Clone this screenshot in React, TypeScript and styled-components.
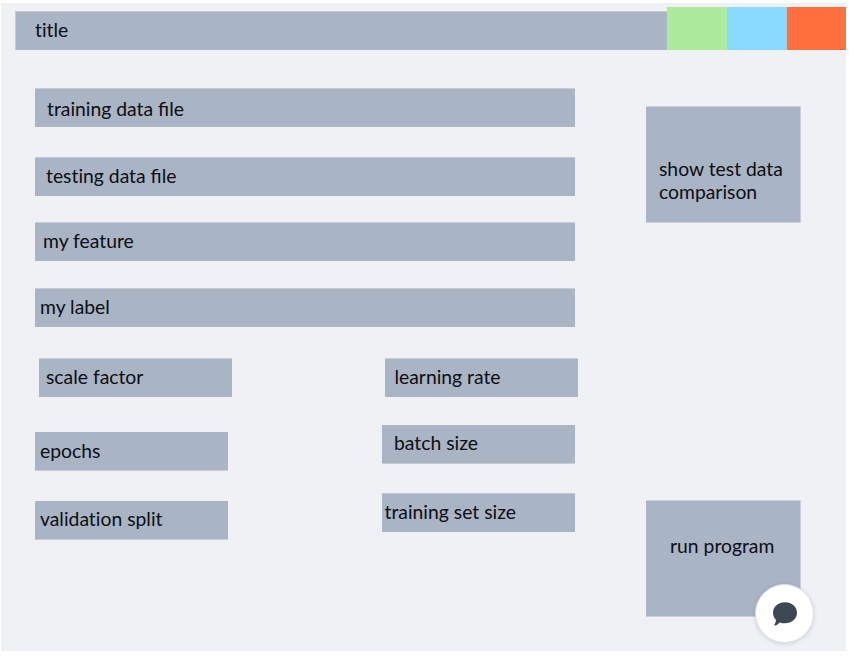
import React from "react";
import styled, { createGlobalStyle } from "styled-components";

const GlobalStyle = createGlobalStyle`
  * { box-sizing: border-box; }
  body {
    margin: 0;
    background: #fff;
    color: #0c0e12;
    font-family: Lato, "Open Sans", sans-serif;
    font-size: 19.33px;
    line-height: 23px;
    font-variant-ligatures: none;
  }
`;

const Canvas = styled.main`
  width: 845px;
  height: 648px;
  margin: 3px 0 0 1px;
  padding-top: 4px;
  background: #eff1f5;
`;

const Header = styled.header`
  display: flex;
  align-items: flex-end;
  height: 43px;
  padding-left: 14px;
`;

const TitleBar = styled.h1`
  flex: 1;
  height: 39px;
  margin: 0;
  padding: 6px 0 0 19px;
  font: inherit;
  font-variant-ligatures: none;
  border-top: 1px solid #c3cbd7;
  border-left: 1px solid #c3cbd7;
  background: #a9b4c5;
`;

const Swatch = styled.div<{ $color: string; $width: number }>`
  width: ${(p) => p.$width}px;
  height: 43px;
  background: ${(p) => p.$color};
`;

const Body = styled.div`
  display: flex;
  padding-left: 34px;
`;

const Form = styled.section`
  width: 611px;
  padding-top: 38px;
`;

const Settings = styled.div`
  display: flex;
  padding-top: 31px;
`;

const SettingsColumn = styled.div<{ $width?: number }>`
  width: ${(p) => p.$width ?? 200}px;
`;

const Joined = styled.span`
  font-variant-ligatures: common-ligatures;
`;

type BoxProps = {
  $gap?: number;
  $indent?: number;
  $x: number;
  $y: number;
};

const Field = styled.div<BoxProps & { $short?: boolean; $edge?: "top" | "bottom" }>`
  width: ${(p) => (p.$short ? 193 : 540)}px;
  height: 39px;
  margin: ${(p) => p.$gap ?? 0}px 0 0 ${(p) => p.$indent ?? 0}px;
  padding: ${(p) => p.$y}px 0 0 ${(p) => p.$x}px;
  white-space: nowrap;
  background: #a9b4c5;
  box-shadow: inset 0 ${(p) => (p.$edge === "bottom" ? -1 : 1)}px #c6cdd9;
`;

const Actions = styled.aside`
  padding-top: 56px;
`;

const ActionButton = styled.button<BoxProps>`
  display: flex;
  align-items: flex-start;
  width: 155px;
  height: 117px;
  margin: ${(p) => p.$gap ?? 0}px 0 0;
  padding: ${(p) => p.$y - 1}px 0 0 ${(p) => p.$x}px;
  color: inherit;
  font: inherit;
  text-align: left;
  border: 0 solid #c9d0db;
  border-width: 1px 1px 1px 0;
  background: #a9b4c5;
`;

const ChatButton = styled.button`
  position: absolute;
  left: 755px;
  top: 584px;
  display: grid;
  place-items: center;
  width: 59px;
  height: 59px;
  padding: 0;
  border: 1px solid #dde1e8;
  border-radius: 50%;
  background: #fff;
  box-shadow: 0 1px 4px rgba(60, 72, 88, 0.18);
`;

const ChatIcon = () => (
  <svg width="26" height="26" viewBox="0 0 26 26" aria-hidden="true">
    <path
      fill="#3e4855"
      d="M13 1.3C19.8 1.3 25 5.8 25 11.8S19.8 22.3 13 22.3c-1.9 0-3.5-.3-5.1-.9-1.7 1.6-3.2 2.7-5 3.1-.6.1-.8-.5-.5-.9.9-1.3 1.500-2.900 1.500-4.900C2 16.800 1 14.500 1 11.800 1 5.800 6.200 1.300 13 1.300z"
    />
  </svg>
);

export default function App() {
  return (
    <>
      <GlobalStyle />
      <Canvas>
        <Header>
          <TitleBar>title</TitleBar>
          <Swatch $color="#adea9c" $width={60} />
          <Swatch $color="#89daff" $width={60} />
          <Swatch $color="#ff703e" $width={59} />
        </Header>
        <Body>
          <Form>
            <Field $x={12} $y={9}>training data <Joined>file</Joined></Field>
            <Field $gap={30} $x={11} $y={7}>testing data <Joined>file</Joined></Field>
            <Field $gap={26} $x={8} $y={7}>my feature</Field>
            <Field $gap={27} $x={5} $y={7}>my label</Field>
            <Settings>
              <SettingsColumn $width={347}>
                <Field $short $indent={4} $x={7} $y={7}>scale factor</Field>
                <Field $short $edge="bottom" $gap={35} $x={5} $y={7}>epochs</Field>
                <Field $short $edge="bottom" $gap={30} $x={5} $y={6}>validation split</Field>
              </SettingsColumn>
              <SettingsColumn>
                <Field $short $indent={2.5} $x={10} $y={7}>learning rate</Field>
                <Field $short $edge="bottom" $gap={28} $x={12} $y={6}>batch size</Field>
                <Field $short $gap={29} $x={2.5} $y={7}>training set size</Field>
              </SettingsColumn>
            </Settings>
          </Form>
          <Actions>
            <ActionButton $x={13} $y={51}>
              show test data
              <br />
              comparison
            </ActionButton>
            <ActionButton $gap={277} $x={24} $y={34}>run program</ActionButton>
          </Actions>
        </Body>
      </Canvas>
      <ChatButton aria-label="chat">
        <ChatIcon />
      </ChatButton>
    </>
  );
}
